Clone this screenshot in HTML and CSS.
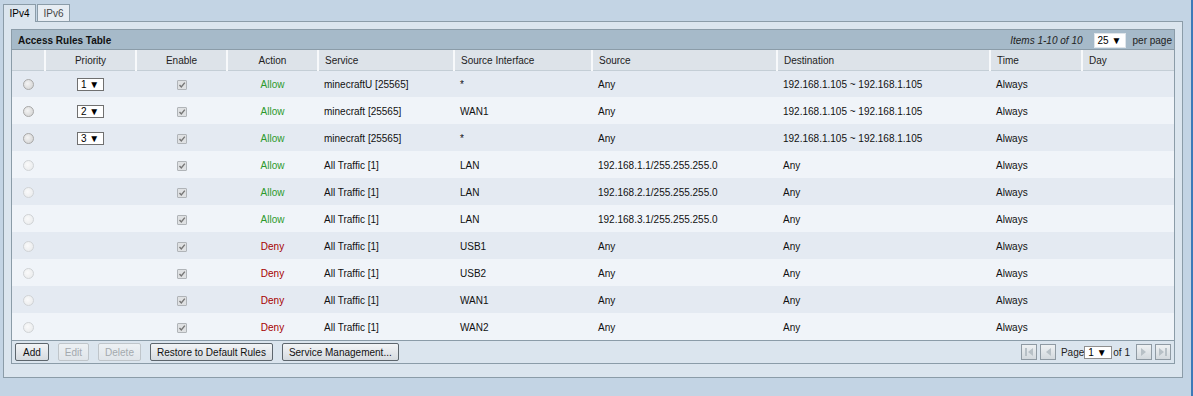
FILE: index.html
```html
<!DOCTYPE html>
<html lang="en">
<head>
    <meta charset="UTF-8">
    <title>Access Rules</title>
    <link rel="stylesheet" href="styles.css">
</head>
<body>
<div class="page">
    <div class="main">
        <div class="tabs">
            <span class="tab active">IPv4</span>
            <span class="tab">IPv6</span>
        </div>
        <div class="panel">
            <div class="grid-box">
                <div class="title-bar">
                    <span class="title">Access Rules Table</span>
                    <span class="items">Items 1-10 of 10</span>
                    <span class="select per-page">25 &#9660;</span>
                    <span class="per-label">per page</span>
                </div>
                <table class="rules">
                    <colgroup>
                        <col style="width:33px"><col style="width:91px"><col style="width:91px"><col style="width:91px">
                        <col style="width:136px"><col style="width:138px"><col style="width:185px"><col style="width:213px">
                        <col style="width:92px"><col style="width:92px">
                    </colgroup>
                    <thead>
                        <tr>
                            <th></th><th class="c">Priority</th><th class="c">Enable</th><th class="c">Action</th>
                            <th>Service</th><th>Source Interface</th><th>Source</th><th>Destination</th><th>Time</th><th>Day</th>
                        </tr>
                    </thead>
                    <tbody>
                        <tr>
                            <td class="c"><span class="radio"></span></td>
                            <td class="c"><span class="select prio">1 &#9660;</span></td>
                            <td class="c"><span class="check"></span></td>
                            <td class="c allow">Allow</td>
                            <td>minecraftU [25565]</td><td>*</td><td>Any</td><td>192.168.1.105 ~ 192.168.1.105</td><td>Always</td><td></td>
                        </tr>
                        <tr>
                            <td class="c"><span class="radio"></span></td>
                            <td class="c"><span class="select prio">2 &#9660;</span></td>
                            <td class="c"><span class="check"></span></td>
                            <td class="c allow">Allow</td>
                            <td>minecraft [25565]</td><td>WAN1</td><td>Any</td><td>192.168.1.105 ~ 192.168.1.105</td><td>Always</td><td></td>
                        </tr>
                        <tr>
                            <td class="c"><span class="radio"></span></td>
                            <td class="c"><span class="select prio">3 &#9660;</span></td>
                            <td class="c"><span class="check"></span></td>
                            <td class="c allow">Allow</td>
                            <td>minecraft [25565]</td><td>*</td><td>Any</td><td>192.168.1.105 ~ 192.168.1.105</td><td>Always</td><td></td>
                        </tr>
                        <tr>
                            <td class="c"><span class="radio off"></span></td><td></td>
                            <td class="c"><span class="check"></span></td>
                            <td class="c allow">Allow</td>
                            <td>All Traffic [1]</td><td>LAN</td><td>192.168.1.1/255.255.255.0</td><td>Any</td><td>Always</td><td></td>
                        </tr>
                        <tr>
                            <td class="c"><span class="radio off"></span></td><td></td>
                            <td class="c"><span class="check"></span></td>
                            <td class="c allow">Allow</td>
                            <td>All Traffic [1]</td><td>LAN</td><td>192.168.2.1/255.255.255.0</td><td>Any</td><td>Always</td><td></td>
                        </tr>
                        <tr>
                            <td class="c"><span class="radio off"></span></td><td></td>
                            <td class="c"><span class="check"></span></td>
                            <td class="c allow">Allow</td>
                            <td>All Traffic [1]</td><td>LAN</td><td>192.168.3.1/255.255.255.0</td><td>Any</td><td>Always</td><td></td>
                        </tr>
                        <tr>
                            <td class="c"><span class="radio off"></span></td><td></td>
                            <td class="c"><span class="check"></span></td>
                            <td class="c deny">Deny</td>
                            <td>All Traffic [1]</td><td>USB1</td><td>Any</td><td>Any</td><td>Always</td><td></td>
                        </tr>
                        <tr>
                            <td class="c"><span class="radio off"></span></td><td></td>
                            <td class="c"><span class="check"></span></td>
                            <td class="c deny">Deny</td>
                            <td>All Traffic [1]</td><td>USB2</td><td>Any</td><td>Any</td><td>Always</td><td></td>
                        </tr>
                        <tr>
                            <td class="c"><span class="radio off"></span></td><td></td>
                            <td class="c"><span class="check"></span></td>
                            <td class="c deny">Deny</td>
                            <td>All Traffic [1]</td><td>WAN1</td><td>Any</td><td>Any</td><td>Always</td><td></td>
                        </tr>
                        <tr>
                            <td class="c"><span class="radio off"></span></td><td></td>
                            <td class="c"><span class="check"></span></td>
                            <td class="c deny">Deny</td>
                            <td>All Traffic [1]</td><td>WAN2</td><td>Any</td><td>Any</td><td>Always</td><td></td>
                        </tr>
                    </tbody>
                </table>
                <div class="footer">
                    <div class="buttons">
                        <button class="btn">Add</button>
                        <button class="btn" disabled>Edit</button>
                        <button class="btn" disabled>Delete</button>
                        <button class="btn">Restore to Default Rules</button>
                        <button class="btn">Service Management...</button>
                    </div>
                    <div class="pager">
                        <span class="nav"><svg width="14" height="14" viewBox="0 0 14 14"><rect x="3" y="3" width="2" height="8" fill="#b7c0c6"/><path d="M11 3 L6 7 L11 11 Z" fill="#b7c0c6"/></svg></span>
                        <span class="nav"><svg width="14" height="14" viewBox="0 0 14 14"><path d="M10 3 L5 7 L10 11 Z" fill="#b7c0c6"/></svg></span>
                        <span class="page-label">Page</span>
                        <span class="select page-sel">1 &#9660;</span>
                        <span class="of-label">of 1</span>
                        <span class="nav"><svg width="14" height="14" viewBox="0 0 14 14"><path d="M4 3 L9 7 L4 11 Z" fill="#b7c0c6"/></svg></span>
                        <span class="nav"><svg width="14" height="14" viewBox="0 0 14 14"><path d="M3 3 L8 7 L3 11 Z" fill="#b7c0c6"/><rect x="9" y="3" width="2" height="8" fill="#b7c0c6"/></svg></span>
                    </div>
                </div>
            </div>
        </div>
    </div>
    <div class="edge"></div>
</div>
</body>
</html>
```

FILE: styles.css
```css
/* Global */
body {
    margin: 0;
    background: #c3d4e4;
    font-family: "Liberation Sans", Arial, sans-serif;
    font-size: 10px;
    color: #222;
}

.page {
    display: flex;
    height: 396px;
}

.main {
    flex: 1;
    padding: 4px 8px 0 3px;
}

.edge {
    width: 4px;
    background: #3d7ab8;
}

/* Tabs */
.tabs {
    display: flex;
    gap: 1px;
    height: 17px;
}

.tab {
    box-sizing: border-box;
    width: 33px;
    height: 17px;
    padding-top: 3px;
    text-align: center;
    border: 1px solid #8b9ca8;
    border-bottom: none;
    background: #e7edf3;
    color: #444;
}

.tab.active {
    height: 18px;
    background: #dbe5ee;
    color: #000;
    position: relative;
    z-index: 1;
}

/* Outer panel */
.panel {
    height: 357px;
    box-sizing: border-box;
    border: 1px solid #8b9ca8;
    background: #dbe5ee;
    padding: 7px 7px 0 7px;
}

.grid-box {
    border: 1px solid #8b9ca8;
    background: #dbe5ee;
}

/* Title bar */
.title-bar {
    display: flex;
    align-items: center;
    height: 20px;
    background: #a6bac9;
    border-bottom: 1px solid #8b9ca8;
    padding: 2px 2px 0 6px;
    box-sizing: border-box;
}

.title {
    font-weight: bold;
    color: #111;
    flex: 1;
}

.items {
    font-style: italic;
    color: #222;
    margin-right: 11px;
}

.select {
    display: inline-block;
    box-sizing: border-box;
    background: #fff;
    border: 1px solid #8f8f8f;
    font-size: 10px;
    line-height: 11px;
    color: #000;
    white-space: nowrap;
}

.per-page {
    width: 32px;
    height: 15px;
    padding: 1px 3px;
    border-color: #dfe5ea;
    margin-right: 7px;
}

.per-label {
    color: #222;
}

/* Table */
.rules {
    width: 100%;
    border-collapse: collapse;
    table-layout: fixed;
}

.rules th {
    box-sizing: border-box;
    height: 20px;
    background: #dde3e9;
    font-weight: normal;
    color: #222;
    text-align: left;
    padding: 1px 6px 0;
    border-left: 2px solid #f7f9fb;
    border-bottom: 1px solid #c4ced6;
}

.rules th:first-child {
    border-left: none;
}

.rules td {
    box-sizing: border-box;
    height: 27px;
    padding: 1px 6px 0;
    color: #111;
    white-space: nowrap;
}

.rules .c {
    text-align: center;
}

.rules tbody tr:nth-child(odd) {
    background: #e4eaf2;
}

.rules tbody tr:nth-child(even) {
    background: #f0f4f9;
}

.allow {
    color: #2c9a2c !important;
}

.deny {
    color: #a60000 !important;
}

/* Row controls */
.radio {
    display: inline-block;
    width: 9px;
    height: 9px;
    border-radius: 50%;
    border: 1px solid #a9a9a9;
    background: radial-gradient(circle at 40% 40%, #f4f4f4, #cfcfcf);
    vertical-align: middle;
}

.radio.off {
    border-color: #d0d3d6;
    background: radial-gradient(circle at 40% 40%, #fafafa, #e6e8ea);
}

.check {
    display: inline-block;
    width: 8px;
    height: 8px;
    border: 1px solid #b0b4b8;
    border-radius: 1px;
    background: #dfe1e3 url("data:image/svg+xml,%3Csvg xmlns='http://www.w3.org/2000/svg' width='8' height='8'%3E%3Cpath d='M1.5 4 L3.3 6 L6.8 1.6' stroke='%23777' stroke-width='1.4' fill='none'/%3E%3C/svg%3E") no-repeat center;
    vertical-align: middle;
}

.prio {
    width: 27px;
    height: 13px;
    padding: 0 3px;
    text-align: left;
    border-color: #707070;
    vertical-align: middle;
}

/* Footer */
.footer {
    display: flex;
    justify-content: space-between;
    align-items: center;
    height: 22px;
    border-top: 1px solid #8b9ca8;
    background: #dbe5ee;
    padding: 0 3px 0 3px;
}

.buttons {
    display: flex;
    gap: 9px;
}

.btn {
    height: 18px;
    padding: 0 6px;
    font-family: "Liberation Sans", Arial, sans-serif;
    font-size: 10px;
    color: #111;
    background: linear-gradient(#f2f4f6, #d6dbe0);
    border: 1px solid #5d666d;
    border-radius: 2px;
}

.btn:first-child {
    padding: 0 7px;
}

.btn:disabled {
    color: #a3a9ae;
    border-color: #bfc5ca;
    background: linear-gradient(#edf1f4, #e0e5ea);
}

/* Pager */
.pager {
    display: flex;
    align-items: center;
}

.nav {
    display: inline-flex;
    align-items: center;
    justify-content: center;
    width: 14px;
    height: 14px;
    border: 1px solid #8f9aa3;
    background: linear-gradient(#eef1f3, #d3d9de);
    margin-right: 3px;
}

.nav:last-child {
    margin-right: 0;
}

.page-label {
    margin-left: 2px;
    color: #222;
}

.page-sel {
    width: 28px;
    height: 13px;
    padding: 0 3px;
    border-color: #8f8f8f;
}

.of-label {
    margin: 0 6px 0 1px;
    color: #222;
}
```
